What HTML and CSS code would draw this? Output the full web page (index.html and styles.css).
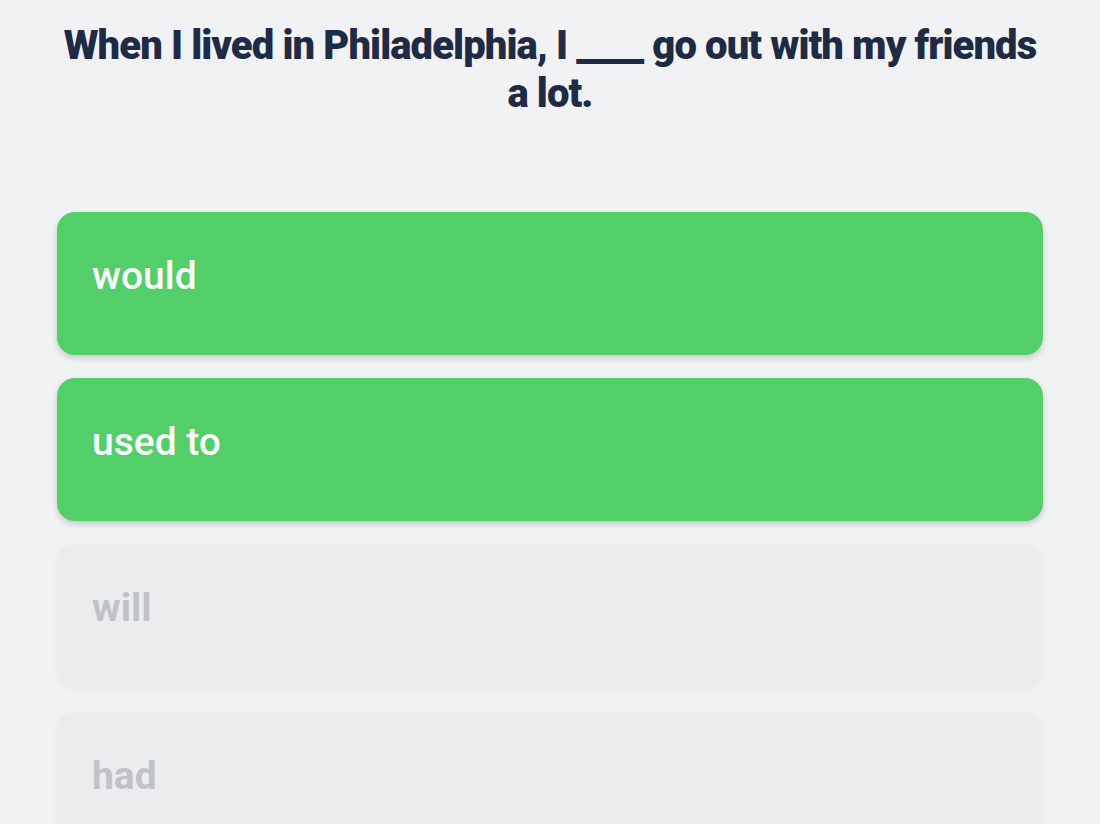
FILE: index.html
```html
<!DOCTYPE html>
<html lang="en">
<head>
<meta charset="utf-8">
<link rel="stylesheet" href="styles.css">
<title>Quiz</title>
</head>
<body>
<main class="quiz">
  <h1 class="question">When I lived in Philadelphia, I ____ go out with my friends a lot.</h1>
  <div class="options">
    <button class="option option--active">would</button>
    <button class="option option--active">used to</button>
    <button class="option option--muted">will</button>
    <button class="option option--muted">had</button>
  </div>
</main>
</body>
</html>
```
FILE: styles.css
```css
html, body {
  margin: 0;
  padding: 0;
  background: #f1f2f4;
  height: 100%;
  overflow: hidden;
}
.quiz {
  font-family: Roboto, "Liberation Sans", sans-serif;
  padding: 22px 57px 0;
  display: flex;
  flex-direction: column;
}
.question {
  margin: 0;
  text-align: center;
  color: #1f2a44;
  font-weight: 900;
  font-size: 40px;
  line-height: 48px;
  letter-spacing: -0.9px;
}
.options {
  margin-top: 94px;
  display: flex;
  flex-direction: column;
  gap: 23px;
}
.option {
  font-family: inherit;
  border: none;
  text-align: left;
  height: 143px;
  border-radius: 18px;
  padding: 0 35px;
  display: flex;
  align-items: flex-start;
  padding-top: 42px;
  font-size: 39px;
  font-weight: 500;
  line-height: 44px;
}
.option--active {
  background: #52cf69;
  color: #ffffff;
  box-shadow: 0 3px 6px rgba(0, 0, 0, 0.18);
}
.option--muted {
  background: #ebecee;
  color: #c0c2c8;
  font-weight: 700;
  box-shadow: 0 2px 6px rgba(0, 0, 0, 0.04);
}
.option--muted + .option--muted {
  margin-top: 2px;
}
```
